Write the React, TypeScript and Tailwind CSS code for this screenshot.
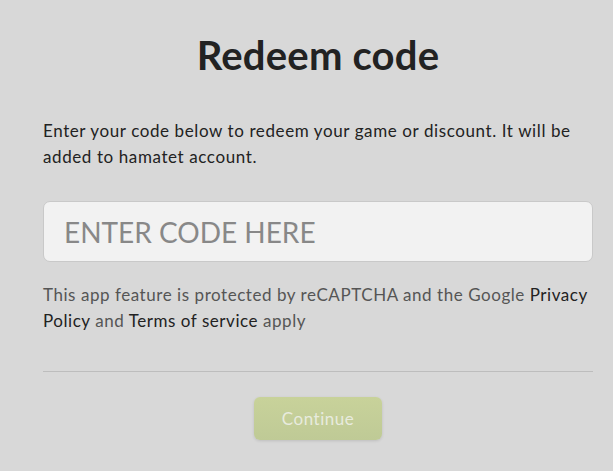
import { useState } from "react";

export default function App() {
  const [code, setCode] = useState("");

  return (
    <div className="min-h-[471px] w-full bg-[#d8d8d8] font-['Lato',sans-serif] text-[#222]">
      <div className="ml-[43px] w-[550px] pt-[27px]">
        <h1 className="text-center text-[40px] font-bold leading-[56px] tracking-[0.2px] text-[#222]">Redeem code</h1>

        <p className="mt-[35px] text-[17px] leading-[26px] tracking-[0.6px] text-[#222]">
          Enter your code below to redeem your game or discount. It will be added to hamatet account.
        </p>

        <input
          className="mt-[31px] block h-[61px] w-full rounded-[7px] border border-[#c9c9c9] bg-[#f2f2f2] px-[20px] text-[28px] text-[#555] placeholder:text-[#888] focus:outline-none"
          placeholder="ENTER CODE HERE"
          value={code}
          onChange={(e) => setCode(e.target.value)}
        />

        <p className="mt-[20px] text-[17px] leading-[26px] tracking-[0.55px] text-[#555]">
          This app feature is protected by reCAPTCHA and the Google{" "}
          <a className="text-[#222]" href="#">Privacy Policy</a> and{" "}
          <a className="text-[#222]" href="#">Terms of service</a> apply
        </p>

        <hr className="mt-[37px] border-t border-[#bdbdbd]" />

        <div className="mt-[25px] flex justify-center">
          <button
            className="h-[43px] w-[128px] rounded-[6px] bg-gradient-to-b from-[#c8d29a] to-[#bfca96] text-[17px] tracking-[0.5px] text-[#e8ebde] shadow-[0_1px_3px_rgba(0,0,0,0.12)]"
            disabled
          >
            Continue
          </button>
        </div>
      </div>
    </div>
  );
}
